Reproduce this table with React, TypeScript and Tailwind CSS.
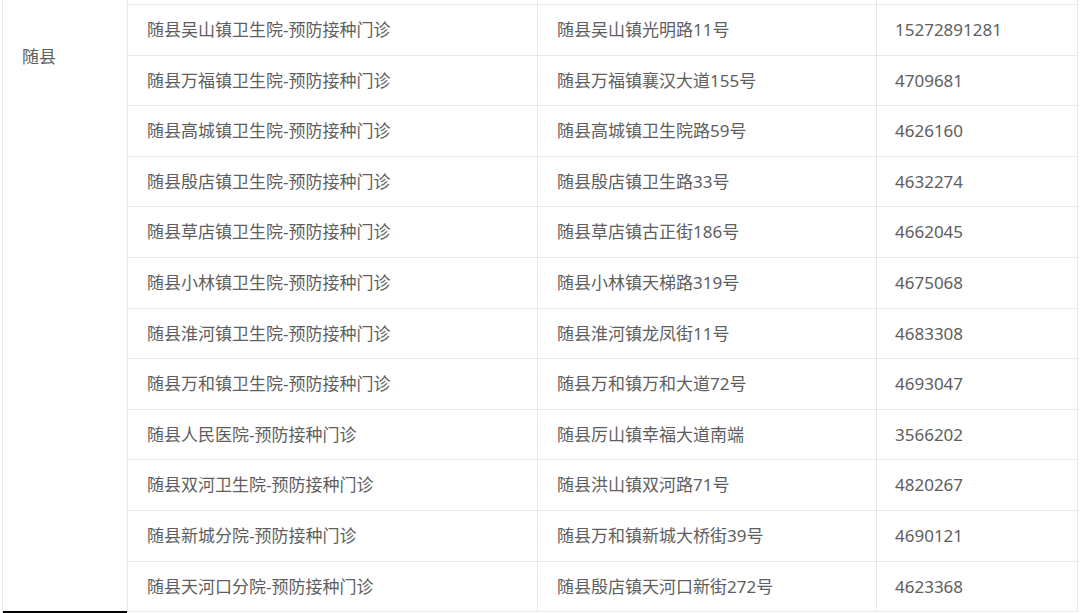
import * as React from 'react'

const rows: [string, string, string][] = [
  ['随县吴山镇卫生院-预防接种门诊', '随县吴山镇光明路11号', '15272891281'],
  ['随县万福镇卫生院-预防接种门诊', '随县万福镇襄汉大道155号', '4709681'],
  ['随县高城镇卫生院-预防接种门诊', '随县高城镇卫生院路59号', '4626160'],
  ['随县殷店镇卫生院-预防接种门诊', '随县殷店镇卫生路33号', '4632274'],
  ['随县草店镇卫生院-预防接种门诊', '随县草店镇古正街186号', '4662045'],
  ['随县小林镇卫生院-预防接种门诊', '随县小林镇天梯路319号', '4675068'],
  ['随县淮河镇卫生院-预防接种门诊', '随县淮河镇龙凤街11号', '4683308'],
  ['随县万和镇卫生院-预防接种门诊', '随县万和镇万和大道72号', '4693047'],
  ['随县人民医院-预防接种门诊', '随县厉山镇幸福大道南端', '3566202'],
  ['随县双河卫生院-预防接种门诊', '随县洪山镇双河路71号', '4820267'],
  ['随县新城分院-预防接种门诊', '随县万和镇新城大桥街39号', '4690121'],
  ['随县天河口分院-预防接种门诊', '随县殷店镇天河口新街272号', '4623368'],
]

export default function App() {
  return (
    <div
      className="w-[1080px] h-[613px] bg-white overflow-hidden flex pl-[2px] text-[17px] text-[#5e5e5e]"
      style={{ fontFamily: '"Noto Sans", "Noto Sans CJK SC", sans-serif' }}
    >
      {/* county cell, spans all rows */}
      <div className="w-[126px] h-[613px] border-l border-r border-[#e8e8e8] flex flex-col">
        <div className="flex-1 pl-[19px] pt-[44px] leading-[26px]">随县</div>
        <div className="h-[2px] bg-black" />
      </div>

      <div className="w-[950px] flex flex-col">
        {/* tail of the row scrolled above */}
        <div className="grid grid-cols-[410px_339px_201px] h-[5px] border-b border-[#e8e8e8]">
          <div className="border-r border-[#e8e8e8]" />
          <div className="border-r border-[#e8e8e8]" />
          <div className="border-r border-[#e8e8e8]" />
        </div>
        {rows.map(([name, addr, phone]) => (
          <div
            key={name}
            className="grid grid-cols-[410px_339px_201px] h-[50.6px] border-b border-[#e8e8e8]"
          >
            <div className="border-r border-[#e8e8e8] flex items-center pl-[19px]">{name}</div>
            <div className="border-r border-[#e8e8e8] flex items-center pl-[19px]">{addr}</div>
            <div className="border-r border-[#e8e8e8] flex items-center pl-[18px]">{phone}</div>
          </div>
        ))}
      </div>
    </div>
  )
}
